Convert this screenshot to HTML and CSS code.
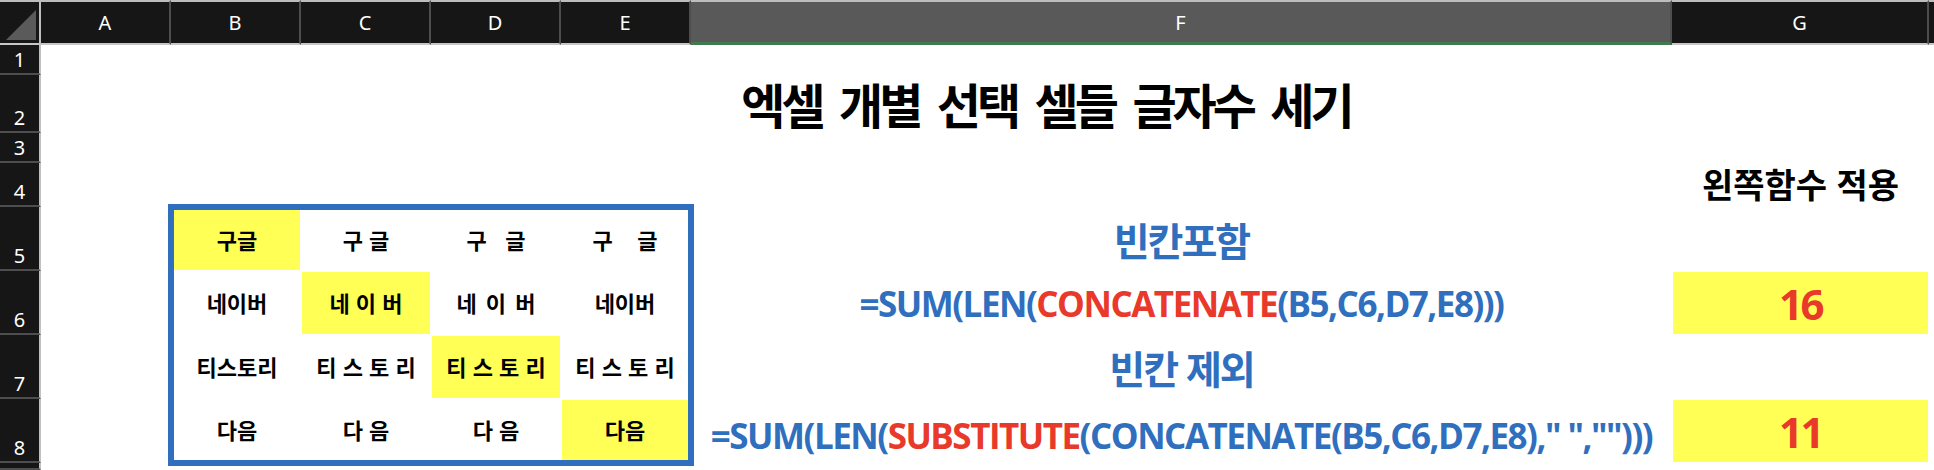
FILE: index.html
```html
<!DOCTYPE html>
<html lang="ko">
<head>
<meta charset="utf-8">
<title>엑셀 개별 선택 셀들 글자수 세기</title>
<link rel="stylesheet" href="styles.css">
</head>
<body>
<div class="sheet">
  <div class="corner">
    <svg width="41" height="45" viewBox="0 0 41 45"><polygon points="6,40 36,40 36,10" fill="#5a5a5a"/></svg>
  </div>
  <div class="colhead">A</div>
  <div class="colhead">B</div>
  <div class="colhead">C</div>
  <div class="colhead">D</div>
  <div class="colhead">E</div>
  <div class="colhead sel">F</div>
  <div class="colhead">G</div>
  <div class="colhead rest"></div>

  <div class="rowhead">1</div>
  <div class="rowhead">2</div>
  <div class="rowhead">3</div>
  <div class="rowhead">4</div>
  <div class="rowhead">5</div>
  <div class="rowhead">6</div>
  <div class="rowhead">7</div>
  <div class="rowhead">8</div>
  <div class="rowhead"></div>

  <div class="title">엑셀 개별 선택 셀들 글자수 세기</div>
  <div class="g4">왼쪽함수 적용</div>

  <div class="box">
    <div class="cell hl">구글</div>
    <div class="cell">구 글</div>
    <div class="cell">구   글</div>
    <div class="cell">구    글</div>
    <div class="cell">네이버</div>
    <div class="cell hl">네 이 버</div>
    <div class="cell wide">네 이 버</div>
    <div class="cell">네이버</div>
    <div class="cell">티스토리</div>
    <div class="cell">티 스 토 리</div>
    <div class="cell hl">티 스 토 리</div>
    <div class="cell">티 스 토 리</div>
    <div class="cell">다음</div>
    <div class="cell">다 음</div>
    <div class="cell">다 음</div>
    <div class="cell hl">다음</div>
  </div>

  <div class="label l5">빈칸포함</div>
  <div class="formula f6">=SUM(LEN(<span class="fn">CONCATENATE</span>(B5,C6,D7,E8)))</div>
  <div class="result r6">16</div>
  <div class="label l7">빈칸 제외</div>
  <div class="formula f8">=SUM(LEN(<span class="fn">SUBSTITUTE</span>(CONCATENATE(B5,C6,D7,E8)," ","")))</div>
  <div class="result r8">11</div>
</div>
</body>
</html>
```

FILE: styles.css
```css
html, body {
  margin: 0;
  padding: 0;
  background: #ffffff;
}

body {
  width: 1934px;
  height: 470px;
  overflow: hidden;
}

.sheet {
  display: grid;
  grid-template-columns: 41px 130px 130px 130px 130px 130px 981px 257px 1fr;
  grid-template-rows: 45px 30px 58px 30px 44px 64px 64px 64px 64px 1fr;
  width: 1934px;
  height: 470px;
  background: #ffffff;
}

.corner {
  grid-row: 1;
  grid-column: 1;
  background: #161616;
  border-top: 2px solid #bdbdbd;
  border-bottom: 2px solid #c6c6c6;
  border-right: 2px solid #c0c0c0;
  box-sizing: border-box;
  overflow: hidden;
}

.corner svg {
  display: block;
  margin-top: -2px;
}

.colhead {
  grid-row: 1;
  background: #161616;
  color: #ffffff;
  font-family: "Noto Sans", "DejaVu Sans", sans-serif;
  font-size: 20px;
  border-top: 2px solid #bdbdbd;
  border-bottom: 2px solid #c6c6c6;
  border-right: 2px solid #4e4e4e;
  box-sizing: border-box;
  display: flex;
  align-items: center;
  justify-content: center;
}

.colhead.sel {
  background: #595959;
  border-bottom: 3px solid #3f7b4f;
}

.colhead.rest {
  border-right: none;
}

.rowhead {
  grid-column: 1;
  background: #161616;
  color: #ffffff;
  font-family: "Noto Sans", "DejaVu Sans", sans-serif;
  font-size: 20px;
  line-height: 24px;
  border-right: 2px solid #c0c0c0;
  border-bottom: 2px solid #4e4e4e;
  box-sizing: border-box;
  display: flex;
  align-items: flex-end;
  justify-content: center;
  padding-bottom: 1px;
}

.title {
  grid-row: 3;
  grid-column: 3 / 9;
  display: flex;
  align-items: flex-end;
  justify-content: center;
  font-family: "Noto Sans CJK KR", sans-serif;
  font-weight: 700;
  font-size: 48px;
  line-height: 56px;
  letter-spacing: -4px;
  word-spacing: 8px;
  color: #000000;
  padding-bottom: 2px;
  padding-right: 8px;
}

.g4 {
  grid-row: 5;
  grid-column: 8;
  display: flex;
  align-items: flex-end;
  justify-content: center;
  font-family: "Noto Sans CJK KR", sans-serif;
  font-weight: 700;
  font-size: 34px;
  line-height: 38px;
  letter-spacing: 0;
  color: #000000;
  padding-bottom: 4px;
}

.box {
  grid-row: 6 / 10;
  grid-column: 3 / 7;
  margin: -3px;
  border: 6px solid #2f6fbe;
  display: grid;
  grid-template-columns: 126px 128px 128px 126px;
  grid-template-rows: 60px 62px 62px 60px;
  gap: 2px;
  background: #ffffff;
  position: relative;
}

.cell {
  display: flex;
  align-items: center;
  justify-content: center;
  font-family: "Noto Sans CJK KR", sans-serif;
  font-weight: 700;
  font-size: 22px;
  white-space: pre;
  color: #000000;
  background: #ffffff;
  padding-bottom: 2px;
}

.cell.wide {
  word-spacing: 3px;
}

.cell.hl {
  background: #ffff55;
}

.label {
  grid-column: 7;
  display: flex;
  align-items: center;
  justify-content: center;
  font-family: "Noto Sans CJK KR", sans-serif;
  font-weight: 700;
  font-size: 39px;
  letter-spacing: -2px;
  color: #2f6fbe;
}

.l5 { grid-row: 6; }
.l7 { grid-row: 8; }

.formula {
  grid-column: 7;
  display: flex;
  align-items: center;
  justify-content: center;
  font-family: "Open Sans", "Liberation Sans", sans-serif;
  font-weight: 700;
  font-size: 35px;
  letter-spacing: -1.5px;
  white-space: pre;
  color: #2f6fbe;
}

.f6 { grid-row: 7; }
.f8 { grid-row: 9; padding-top: 8px; }

.fn {
  color: #e8392b;
}

.result {
  grid-column: 8;
  display: flex;
  align-items: center;
  justify-content: center;
  background: #ffff55;
  border: 1px solid #ffffff;
  font-family: "Open Sans", "Liberation Sans", sans-serif;
  font-weight: 700;
  font-size: 42px;
  letter-spacing: -2.5px;
  color: #e8392b;
}

.r6 { grid-row: 7; }
.r8 { grid-row: 9; }
```
